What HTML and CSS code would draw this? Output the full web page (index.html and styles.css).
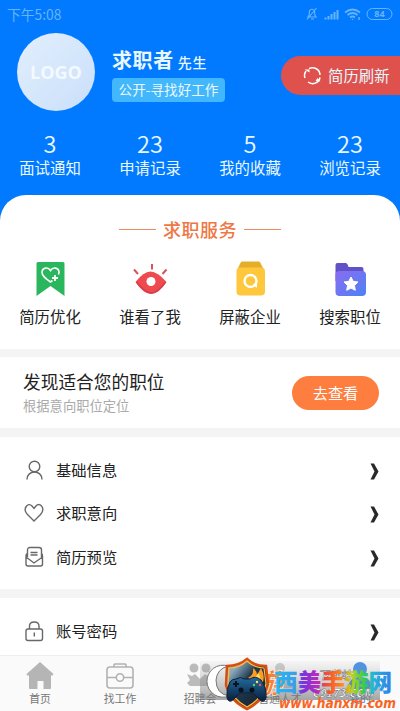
FILE: index.html
```html
<!DOCTYPE html>
<html lang="zh-CN">
<head>
<meta charset="utf-8">
<title>求职者</title>
<link rel="stylesheet" href="styles.css">
</head>
<body>
<div class="app">
  <header class="hero">
    <div class="status">
      <span class="time">下午5:08</span>
      <svg class="status-icons" width="91" height="16" viewBox="0 0 91 16" fill="none" stroke="currentColor">
        <path d="M3 11h8c-2-2-1-4-1.500-6a2.700 2.700 0 0 0-5 0C4 7 5 9 3 11zM6 13h3M11.500 2L2 13.500" stroke-width="1.100"/>
        <path d="M20.500 11.500v2M23.500 10v3.500M26.500 8v5.500M29.500 6v7.500M32.500 4v9.500" stroke-width="2"/>
        <path d="M40 6.500q7.500-6 15 0M42.500 9q5-4 10 0M45 11.500q2.500-2 5 0" stroke-width="1.700"/>
        <path d="M47.500 13v1M54 11v3" stroke-width="1.500"/>
        <rect x="62" y="2.500" width="25" height="11" rx="5.500"/>
        <text x="74.500" y="11.300" class="battery">84</text>
      </svg>
    </div>
    <div class="profile">
      <div class="avatar">LOGO</div>
      <div class="person">
        <div class="name">求职者<small>先生</small></div>
        <div class="tag">公开-寻找好工作</div>
      </div>
      <div class="refresh">
        <svg width="19" height="19" viewBox="0 0 19 19" fill="none" stroke="#fff" stroke-width="1.500">
          <path d="M2 12A7.500 7.500 0 0 1 3 5M6 2.600A7.500 7.500 0 0 1 17 9M17 11.500A7.500 7.500 0 0 1 5 16"/>
          <path d="M1.500 3.500h5v3zM17.500 15.500l-5-.5 2-3z" fill="#fff" stroke="none"/>
        </svg>
        <span>简历刷新</span>
      </div>
    </div>
    <div class="stats">
      <div><b>3</b><span>面试通知</span></div>
      <div><b>23</b><span>申请记录</span></div>
      <div><b>5</b><span>我的收藏</span></div>
      <div><b>23</b><span>浏览记录</span></div>
    </div>
  </header>

  <section class="services">
    <h2>求职服务</h2>
    <div class="service-grid">
      <div>
        <svg width="36" height="36" viewBox="0 0 36 36">
          <path d="M4 3.500Q4 2 5.500 2h25Q32 2 32 3.500V36L18 26 4 36z" fill="#2ab65c"/>
          <path d="M20 20.500l-2 1.500C13 18.500 9.500 16 9.500 12.500c0-5 6-6 8.500-2 2.500-4 8.500-3 8.500 2l-.5 2" fill="none" stroke="#fff" stroke-width="1.600"/>
          <path d="M19.500 18h6M22.500 15v6" stroke="#fff" stroke-width="1.800"/>
        </svg>
        <span>简历优化</span>
      </div>
      <div>
        <svg width="36" height="36" viewBox="0 0 36 36">
          <path d="M3 22Q11 11.500 18 11.500T34 22Q26 34 18.500 34T3 22z" fill="#ee4b50"/>
          <path d="M4 22q8 10.500 14.500 11T33 22" fill="none" stroke="#d93c46" stroke-width="1.500"/>
          <circle cx="18.500" cy="21.500" r="4.500" fill="#fff"/>
          <path d="M1.500 9.500l4 4.500M19.500 4v5.500M34 9.500L30 14" stroke="#d95459" stroke-width="2"/>
        </svg>
        <span>谁看了我</span>
      </div>
      <div>
        <svg width="36" height="36" viewBox="0 0 36 36">
          <path d="M9 2h18l4 8H5z" fill="#e5ae2a" stroke="#e5ae2a" stroke-linejoin="round"/>
          <rect x="4" y="7.500" width="28.500" height="28" rx="4" fill="#ffc83c"/>
          <circle cx="18" cy="21" r="6" fill="none" stroke="#fff" stroke-width="2.400"/>
          <path d="M20 25l4.500 2.800V22z" fill="#fff"/>
        </svg>
        <span>屏蔽企业</span>
      </div>
      <div>
        <svg width="36" height="36" viewBox="0 0 36 36">
          <defs><linearGradient id="folder" x2="1" y2="1"><stop stop-color="#8a6cf0"/><stop offset="1" stop-color="#4d82f5"/></linearGradient></defs>
          <path d="M3 5q0-2 2-2h8q2 0 3 4h13q2 0 2 2v12H3z" fill="#6252c7"/>
          <rect x="3" y="11" width="30.500" height="25" rx="4" fill="url(#folder)"/>
          <path d="M18.500 17l2.200 4.300 4.800.7-3.500 3.500.8 4.800-4.300-2.200-4.300 2.200.8-4.800-3.500-3.500 4.800-.7z" fill="#fff" stroke="#fff" stroke-linejoin="round"/>
        </svg>
        <span>搜索职位</span>
      </div>
    </div>
  </section>

  <section class="discover">
    <div>
      <h3>发现适合您的职位</h3>
      <p>根据意向职位定位</p>
    </div>
    <a class="go">去查看</a>
  </section>

  <section class="menu">
    <div class="row">
      <svg width="20" height="22" viewBox="0 0 20 22"><circle cx="10.500" cy="7.500" r="5.300"/><path d="M3 20.500c0-10 15-10 15 0"/></svg>
      <span>基础信息</span>
      <svg class="arrow" width="9" height="17" viewBox="0 0 9 17"><path d="M.5.5H4l4.500 8L4 16.500H.5l4-8z"/></svg>
    </div>
    <div class="row">
      <svg width="20" height="22" viewBox="0 0 20 22"><path d="M10 19L3.500 12.500C-2 7 4-.500 8 4l2 2.500L12 4c4-4.500 10 2.500 4.500 8.500z"/></svg>
      <span>求职意向</span>
      <svg class="arrow" width="9" height="17" viewBox="0 0 9 17"><path d="M.5.5H4l4.500 8L4 16.500H.5l4-8z"/></svg>
    </div>
    <div class="row">
      <svg width="20" height="22" viewBox="0 0 20 22"><path d="M3.500 11V4q0-2.500 2.500-2.500h9Q17.500 1.500 17.500 4v7M6.500 6.500h7M6.500 9h7M3.500 7.500Q2 8 2 10v8q0 2 2 2h12.500q2 0 2-2v-8q0-2-1-2.500M2 11l8 6 8.500-6"/></svg>
      <span>简历预览</span>
      <svg class="arrow" width="9" height="17" viewBox="0 0 9 17"><path d="M.5.5H4l4.500 8L4 16.500H.5l4-8z"/></svg>
    </div>
  </section>

  <section class="account">
    <div class="row">
      <svg width="20" height="22" viewBox="0 0 20 22"><rect x="2" y="9" width="16.500" height="11.500" rx="2"/><path d="M5.500 9V6q0-4 4.700-4T15 6v3M10.300 12.500v4"/></svg>
      <span>账号密码</span>
      <svg class="arrow" width="9" height="17" viewBox="0 0 9 17"><path d="M.5.5H4l4.500 8L4 16.500H.5l4-8z"/></svg>
    </div>
  </section>

  <nav class="tabs">
    <div>
      <svg width="28" height="28" viewBox="0 0 28 28"><path d="M14 0l13.500 12-1 1.500H25V26q0 1-1 1h-6.500v-8h-6v8H4q-1 0-1-1V13.500H1L.5 12z" fill="#b5b5b5"/></svg>
      <span>首页</span>
    </div>
    <div>
      <svg width="28" height="28" viewBox="0 0 28 28" fill="none" stroke="#b2b2b2" stroke-width="1.600"><rect x="1" y="5" width="26" height="21" rx="3"/><path d="M8 5V3q0-1 1-1h10q1 0 1 1v2M1 15.500h9M18 15.500h9"/><circle cx="14" cy="15.500" r="3.700"/></svg>
      <span>找工作</span>
    </div>
    <div>
      <svg width="28" height="28" viewBox="0 0 28 28" fill="#bbb"><circle cx="8" cy="6" r="4.500"/><circle cx="20" cy="6" r="4.500"/><path d="M1 12l5 2 3-2 5 5v7H4l-3-3 3-3zM27 12l-5 2-3-2-5 5v7h10l3-3-3-3z"/></svg>
      <span>招聘会</span>
    </div>
    <div>
      <svg width="28" height="28" viewBox="0 0 28 28" fill="#ccc"><circle cx="14" cy="6" r="5"/><path d="M2 26q0-12 12-12t12 12z"/></svg>
      <span>普通人才</span>
    </div>
    <div>
      <svg width="28" height="28" viewBox="0 0 28 28" fill="#4793e9"><circle cx="14" cy="7" r="7"/><path d="M2 27q0-12 12-12t12 12z"/></svg>
      <span class="active">我的</span>
    </div>
  </nav>

  <svg class="brand" width="200" height="56" viewBox="0 0 200 56">
    <defs>
      <linearGradient id="plate" x2="0" y2="1"><stop stop-color="#999" stop-opacity=".05"/><stop offset="1" stop-color="#777" stop-opacity=".65"/></linearGradient>
      <linearGradient id="shield" x2="1" y2="1"><stop offset=".2" stop-color="#8aa9bd"/><stop offset=".45" stop-color="#21384d"/><stop offset="1" stop-color="#101c2b"/></linearGradient>
      <linearGradient id="pad" x2="0" y2="1"><stop stop-color="#236b9f"/><stop offset="1" stop-color="#071e3b"/></linearGradient>
      <linearGradient id="title" x1="74" x2="192" gradientUnits="userSpaceOnUse"><stop stop-color="#20bdf5"/><stop offset=".18" stop-color="#3a9ee8"/><stop offset=".24" stop-color="#7634df"/><stop offset=".38" stop-color="#c029bc"/><stop offset=".44" stop-color="#f34a38"/><stop offset=".58" stop-color="#ff8b13"/><stop offset=".66" stop-color="#b8d41b"/><stop offset=".77" stop-color="#2bcf50"/><stop offset=".84" stop-color="#22b5dd"/><stop offset="1" stop-color="#347fe8"/></linearGradient>
    </defs>
    <path d="M0 6h180v39H0z" fill="url(#plate)"/>
    <path d="M28 11A16 16 0 1 0 29 41Q16 39 16 25 17 14 28 11z" fill="#fff" stroke="#777"/>
    <text x="118" y="24" class="back-mark">下载站</text>
    <text x="112" y="42" class="back-mark">C9173.COM</text>
    <text x="55" y="38" class="flare">游</text>
    <path d="M47 4Q39 11 27 11L26 30Q30 46 47 54 64 46 68 29L66 11Q54 11 47 4z" fill="url(#shield)" stroke="#d94e10" stroke-width="2.500"/>
    <path d="M47 6Q39 13 29 13L28 30Q32 44 47 52 62 44 66 29L64 13Q54 13 47 6z" fill="none" stroke="#ffbc3d" stroke-width="1.200"/>
    <path d="M48 23q6-3 5-10 4 3 4 7l4-7q5 9 1 16z" fill="#ff9b20"/>
    <path d="M52 24q5-2 6-6 4 5 1 9z" fill="#ffe05a"/>
    <path d="M36 24q5-3 8 0h6q5-4 11 1 6 9 5 18-2 6-7 1l-6-6H40l-6 6q-5 5-7-1-1-9 3-16 2-3 6-3z" fill="url(#pad)" stroke="#102136"/>
    <path d="M36 26v6M33 29h6" stroke="#08111d" stroke-width="2"/>
    <circle cx="41" cy="35" r="2.500" fill="#08111d"/><circle cx="52" cy="35" r="2.500" fill="#08111d"/>
    <circle cx="57" cy="27" r="1.200" fill="#f9e65b"/><circle cx="60" cy="30" r="1.200" fill="#f15b49"/><circle cx="54" cy="30" r="1.200" fill="#65d25b"/>
    <text x="74" y="35.500" class="brand-title" textLength="118" lengthAdjust="spacingAndGlyphs">西美手游网</text>
    <text x="79" y="53" class="brand-url" textLength="117" lengthAdjust="spacingAndGlyphs">www.hanxm.com</text>
  </svg>
</div>
</body>
</html>
```
FILE: styles.css
```css
* { box-sizing: border-box; }
body {
  margin: 0;
  font-family: "Noto Sans CJK SC", sans-serif;
  color: #222;
  background: #f4f4f4;
}
h2, h3, p { margin: 0; }
svg { flex: none; }
.app {
  position: relative;
  width: 400px;
  height: 711px;
  overflow: hidden;
  display: flex;
  flex-direction: column;
  background: linear-gradient(#027aff 240px, #f4f4f4 240px);
}

.hero { height: 195px; flex: none; color: #e9f8ff; }
.status {
  height: 28px;
  margin-bottom: 2px;
  padding: 0 4px 0 7px;
  display: flex;
  justify-content: space-between;
  align-items: center;
  color: #66b4f8;
}
.time { font-size: 13.8px; }
.battery { font: bold 9px "Noto Sans", sans-serif; fill: currentColor; stroke: none; text-anchor: middle; }
.profile { height: 94px; display: flex; padding-left: 17px; }
.avatar {
  width: 78px;
  height: 78px;
  margin-top: 3px;
  border-radius: 50%;
  background: linear-gradient(135deg, #e2effd, #c9dffa);
  color: #f4f9ff;
  font: bold 18px/78px "Open Sans", sans-serif;
  text-align: center;
}
.person { margin: 16px 0 0 17px; }
.name { height: 32px; line-height: 27px; font-size: 20px; font-weight: 700; letter-spacing: .6px; white-space: nowrap; }
.name small { margin-left: 4px; font-size: 14px; font-weight: 500; }
.tag {
  width: 113px;
  height: 24px;
  border-radius: 4px;
  background: #42b7fb;
  font-size: 13.6px;
  line-height: 23px;
  text-align: center;
  white-space: nowrap;
}
.refresh {
  margin: 26px 0 0 auto;
  width: 119px;
  height: 39px;
  padding-left: 22px;
  border-radius: 20px 0 0 20px;
  background: #de514d;
  display: flex;
  align-items: center;
  gap: 6px;
  font-size: 15.4px;
  white-space: nowrap;
}
.refresh span { margin-top: -2px; }
.stats { display: grid; grid-template-columns: repeat(4, 1fr); padding-top: 6px; }
.stats div { display: flex; flex-direction: column; align-items: center; }
.stats b { font-size: 23.5px; font-weight: 350; line-height: 26px; }
.stats span { font-size: 15.4px; line-height: 22px; }

.services {
  height: 154px;
  flex: none;
  border-radius: 26px 26px 0 0;
  background: #fff;
  padding-top: 21px;
}
h2 {
  display: flex;
  align-items: center;
  justify-content: center;
  gap: 7px;
  color: #ee7745;
  font-size: 18px;
  font-weight: 500;
  letter-spacing: .5px;
  line-height: 26px;
}
h2::before, h2::after { content: ""; width: 37px; height: 1px; background: #ee8a5d; }
.service-grid { display: grid; grid-template-columns: repeat(4, 1fr); padding-top: 18px; }
.service-grid div { display: flex; flex-direction: column; align-items: center; }
.service-grid svg { transform: translateX(.5px); }
.service-grid span { margin-top: 8px; font-size: 15.4px; line-height: 24px; }

.discover {
  height: 71px;
  flex: none;
  margin-top: 8px;
  padding: 0 21px 0 23px;
  background: #fff;
  display: flex;
  align-items: center;
  justify-content: space-between;
}
h3 { font-size: 17.7px; font-weight: 400; line-height: 28px; }
.discover p { font-size: 13.3px; line-height: 22px; color: #aaa; }
.discover div { margin-top: -1px; }
.go {
  width: 87px;
  height: 34px;
  border-radius: 17px;
  background: #fd7e3e;
  color: #fff;
  font-size: 15.2px;
  line-height: 33px;
  text-align: center;
}

.menu { height: 152px; flex: none; margin-top: 9px; padding-top: 11px; background: #fff; }
.account { height: 57px; flex: none; margin-top: 9px; padding-top: 11px; background: #fff; }
.row { height: 43.5px; padding: 0 21px 0 24px; display: flex; align-items: center; }
.row svg { fill: none; stroke: #686868; stroke-width: 1.4; }
.row span { flex: 1; margin: -2px 0 0 12px; font-size: 15.3px; }
.row .arrow { fill: #292929; stroke: none; margin-top: 3px; }

.tabs {
  height: 56px;
  flex: none;
  border-top: 1px solid #eee;
  background: #fafafa;
  display: grid;
  grid-template-columns: repeat(5, 1fr);
}
.tabs div { display: flex; flex-direction: column; align-items: center; padding-top: 6px; }
.tabs span { font-size: 10.8px; line-height: 16px; color: #777; }
.tabs .active { color: #4282bd; }

/* Brand mark floating over the tab bar */
.brand { position: absolute; left: 200px; top: 655px; }
.brand-title { font: 900 24px "Noto Sans CJK SC", sans-serif; fill: url(#title); }
.brand-url { font: italic bold 14px "DejaVu Sans", sans-serif; fill: #fa6422; }
.back-mark { font: italic bold 11px "Noto Sans CJK SC", sans-serif; fill: #fff; stroke: #555; stroke-width: .4px; }
.flare { font: italic 900 27px "Noto Sans CJK SC", sans-serif; fill: #f48432; stroke: #fff; stroke-width: .6px; }
```
